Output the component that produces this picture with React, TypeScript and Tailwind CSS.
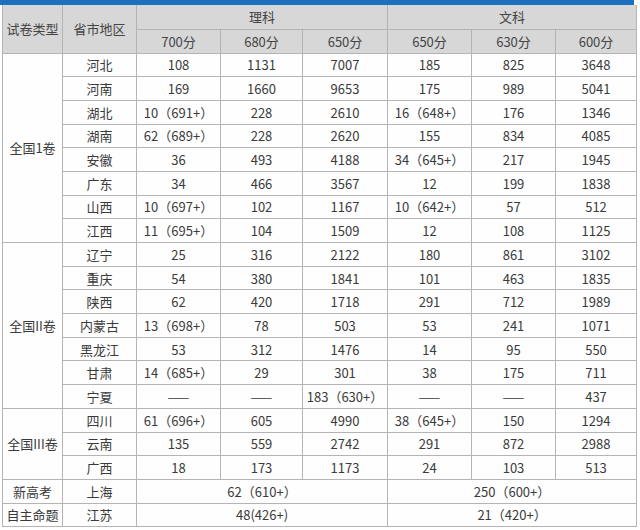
import React from "react"

type Row = { prov: string; cells: string[] }
type Group = { name: string; rows: Row[] }

const groups: Group[] = [
    {
        name: "全国1卷",
        rows: [
            { prov: "河北", cells: ["108", "1131", "7007", "185", "825", "3648"] },
            { prov: "河南", cells: ["169", "1660", "9653", "175", "989", "5041"] },
            { prov: "湖北", cells: ["10（691+）", "228", "2610", "16（648+）", "176", "1346"] },
            { prov: "湖南", cells: ["62（689+）", "228", "2620", "155", "834", "4085"] },
            { prov: "安徽", cells: ["36", "493", "4188", "34（645+）", "217", "1945"] },
            { prov: "广东", cells: ["34", "466", "3567", "12", "199", "1838"] },
            { prov: "山西", cells: ["10（697+）", "102", "1167", "10（642+）", "57", "512"] },
            { prov: "江西", cells: ["11（695+）", "104", "1509", "12", "108", "1125"] },
        ],
    },
    {
        name: "全国II卷",
        rows: [
            { prov: "辽宁", cells: ["25", "316", "2122", "180", "861", "3102"] },
            { prov: "重庆", cells: ["54", "380", "1841", "101", "463", "1835"] },
            { prov: "陕西", cells: ["62", "420", "1718", "291", "712", "1989"] },
            { prov: "内蒙古", cells: ["13（698+）", "78", "503", "53", "241", "1071"] },
            { prov: "黑龙江", cells: ["53", "312", "1476", "14", "95", "550"] },
            { prov: "甘肃", cells: ["14（685+）", "29", "301", "38", "175", "711"] },
            { prov: "宁夏", cells: ["——", "——", "183（630+）", "——", "——", "437"] },
        ],
    },
    {
        name: "全国III卷",
        rows: [
            { prov: "四川", cells: ["61（696+）", "605", "4990", "38（645+）", "150", "1294"] },
            { prov: "云南", cells: ["135", "559", "2742", "291", "872", "2988"] },
            { prov: "广西", cells: ["18", "173", "1173", "24", "103", "513"] },
        ],
    },
]

const td = "border border-[#b4b4b4] text-center align-middle p-0"

export default function App() {
    return (
        <div
            className="w-[640px] h-[530px] bg-white text-[13px] text-[#3a3a3a] leading-none"
            style={{ fontFamily: '"Noto Sans CJK SC", "Noto Sans", sans-serif' }}
        >
            <div className="w-[634px] h-[5px] bg-[#1f6fbf]" />
            <table className="ml-[2px] w-[634px] table-fixed border-collapse">
                <colgroup>
                    <col className="w-[60px]" />
                    <col className="w-[74px]" />
                    <col className="w-[84px]" />
                    <col className="w-[82px]" />
                    <col className="w-[85px]" />
                    <col className="w-[84px]" />
                    <col className="w-[84px]" />
                    <col className="w-[81px]" />
                </colgroup>
                <thead className="bg-[#d7d7d7] text-[#444]">
                    <tr className="h-[24px]">
                        <th rowSpan={2} className={`${td} font-normal border-t-0`}>试卷类型</th>
                        <th rowSpan={2} className={`${td} font-normal border-t-0`}>省市地区</th>
                        <th colSpan={3} className={`${td} font-normal border-t-0`}>理科</th>
                        <th colSpan={3} className={`${td} font-normal border-t-0`}>文科</th>
                    </tr>
                    <tr className="h-[24px]">
                        {["700分", "680分", "650分", "650分", "630分", "600分"].map((h, i) => (
                            <th key={i} className={`${td} font-normal`}>{h}</th>
                        ))}
                    </tr>
                </thead>
                <tbody className="bg-[#fefefe]">
                    {groups.map((g) =>
                        g.rows.map((r, i) => (
                            <tr key={r.prov} className="h-[23.7px]">
                                {i === 0 && (
                                    <td rowSpan={g.rows.length} className={td}>{g.name}</td>
                                )}
                                <td className={td}>{r.prov}</td>
                                {r.cells.map((c, j) => (
                                    <td key={j} className={td}>{c}</td>
                                ))}
                            </tr>
                        ))
                    )}
                    <tr className="h-[23.7px]">
                        <td className={td}>新高考</td>
                        <td className={td}>上海</td>
                        <td colSpan={3} className={td}>62（610+）</td>
                        <td colSpan={3} className={td}>250（600+）</td>
                    </tr>
                    <tr className="h-[23.7px]">
                        <td className={td}>自主命题</td>
                        <td className={td}>江苏</td>
                        <td colSpan={3} className={td}>48(426+)</td>
                        <td colSpan={3} className={td}>21（420+）</td>
                    </tr>
                </tbody>
            </table>
        </div>
    )
}
